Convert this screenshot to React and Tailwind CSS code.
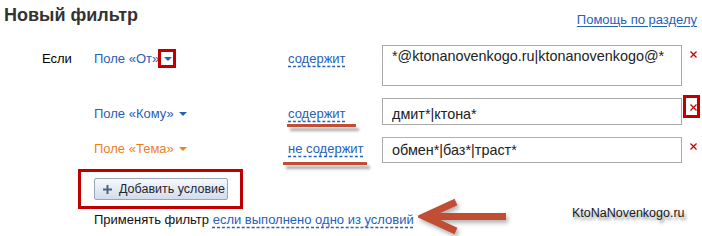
import React from 'react';

const rows = [
  {
    lead: 'Если',
    field: 'Поле «От»',
    fieldColor: 'text-[#2860b5]',
    arrowColor: '#2860b5',
    boxedArrow: true,
    condition: 'содержит',
    value: '*@ktonanovenkogo.ru|ktonanovenkogo@*',
    multiline: true,
  },
  {
    field: 'Поле «Кому»',
    fieldColor: 'text-[#2860b5]',
    arrowColor: '#2860b5',
    condition: 'содержит',
    value: 'дмит*|ктона*',
    marked: true,
    boxedRemove: true,
  },
  {
    field: 'Поле «Тема»',
    fieldColor: 'text-[#f0801e]',
    arrowColor: '#f0801e',
    condition: 'не содержит',
    value: 'обмен*|баз*|траст*',
    marked: true,
    focused: true,
  },
];

const labelPad = ['pt-[6px]', 'pt-[8px]', 'pt-[4px]'];

const Caret = ({ color }) => (
  <svg width="8" height="4" viewBox="0 0 8 4" className="shrink-0">
    <path d="M0 0h8L4 4z" fill={color} />
  </svg>
);

const Cross = () => (
  <svg width="7" height="7" viewBox="0 0 7 7" className="block">
    <path d="M0.5 0.5l6 6M6.5 0.5l-6 6" stroke="#cc0000" strokeWidth="1.3" />
  </svg>
);

const ConditionRow = ({ row, index }) => {
  const pad = labelPad[index];
  return (
    <div className="flex items-start pl-[42px]">
      <div className={`w-[52px] ${pad} text-[13px] leading-[16px] text-black`}>{row.lead}</div>

      <div className={`w-[194px] ${pad} flex items-center gap-[5px] text-[13px] leading-[16px] ${row.fieldColor}`}>
        <span>{row.field}</span>
        {row.boxedArrow ? (
          <span className="relative flex items-center">
            <Caret color={row.arrowColor} />
            <span className="absolute left-[-6px] top-[-8px] w-[18px] h-[19px] border-[3px] border-[#c00000]" />
          </span>
        ) : (
          <span className="flex items-center">
            <Caret color={row.arrowColor} />
          </span>
        )}
      </div>

      <div className={`relative w-[94px] ${pad} text-[13px] leading-[16px] text-[#2860b5]`}>
        <span className="underline decoration-dashed underline-offset-[3px]">{row.condition}</span>
        {row.marked && (
          <span
            className={
              index === 1
                ? 'absolute left-[-1px] top-[26px] w-[69px] h-[3px] bg-[#c24d35] shadow-[3px_4px_3px_rgba(0,0,0,0.35)]'
                : 'absolute left-[-5px] top-[25px] w-[84px] h-[3px] bg-[#c24d35] shadow-[3px_4px_3px_rgba(0,0,0,0.35)]'
            }
          />
        )}
      </div>

      {row.multiline ? (
        <textarea
          readOnly
          value={row.value}
          className="w-[300px] h-[41px] resize-none border border-[#aaaaaa] pt-[1px] px-[9px] text-[14.4px] leading-[18px] text-[#222] outline-none"
        />
      ) : (
        <input
          readOnly
          value={row.value}
          className={`w-[300px] ${index === 1 ? 'h-[27px] pt-[5px]' : 'h-[26px]'} border border-[#aaaaaa] ${
            row.focused ? 'border-t-[#8bb8e8]' : ''
          } px-[9px] text-[14.4px] leading-[18px] text-[#222] outline-none`}
        />
      )}

      <div className="relative ml-[8px] mt-[6px]">
        <Cross />
        {row.boxedRemove && (
          <span className="absolute left-[-7px] top-[-9px] w-[17px] h-[23px] border-[3px] border-[#c00000]" />
        )}
      </div>
    </div>
  );
};

export default function App() {
  return (
    <div className="relative w-[702px] h-[236px] bg-white overflow-hidden font-['Liberation_Sans',Arial,sans-serif]">
      <div className="flex items-start justify-between pt-[3px] pl-[4px] pr-[5px]">
        <h1 className="text-[18px] leading-[24px] font-bold text-[#333]">Новый фильтр</h1>
        <a href="#" className="mt-[9px] text-[13px] leading-[16px] text-[#2860b5] underline underline-offset-[2px]">
          Помощь по разделу
        </a>
      </div>

      <div className="mt-[17px] flex flex-col gap-[12px]">
        {rows.map((row, i) => (
          <ConditionRow key={i} row={row} index={i} />
        ))}
      </div>

      <div className="ml-[78px] mt-[6px] w-[165px] h-[40px] border-[3px] border-[#c00000] pl-[13px] pt-[6px]">
        <button className="flex items-center gap-[7px] w-[134px] h-[22px] pl-[8px] rounded-[2px] border border-[#97a6bb] bg-gradient-to-b from-[#f7f9fc] to-[#d3dce9] text-[12.5px] leading-[16px] whitespace-nowrap text-[#1d2633]">
          <svg width="9" height="9" viewBox="0 0 9 9" className="shrink-0">
            <path d="M3.5 0h2v3.5H9v2H5.5V9h-2V5.5H0v-2h3.5z" fill="#4c6384" />
          </svg>
          <span>Добавить условие</span>
        </button>
      </div>

      <div className="ml-[94px] mt-[3px] text-[13px] leading-[16px] text-[#111]">
        Применять фильтр{' '}
        <span className="text-[#2860b5] underline decoration-dashed underline-offset-[3px]">
          если выполнено одно из условий
        </span>
      </div>

      <svg
        className="absolute left-[418px] top-[198px] drop-shadow-[2px_3px_2px_rgba(0,0,0,0.3)]"
        width="92"
        height="38"
        viewBox="0 0 92 38"
      >
        <path d="M38 4L6 18.5L38 33" fill="none" stroke="#c24d35" strokeWidth="7" strokeLinejoin="miter" />
        <path d="M10 18.5H88" stroke="#c24d35" strokeWidth="7" />
      </svg>

      <div className="absolute left-[572px] top-[205px] text-[12.5px] leading-[16px] text-[#1a1a1a] [text-shadow:2px_3px_3px_rgba(0,0,0,0.45)]">
        KtoNaNovenkogo.ru
      </div>
    </div>
  );
}
